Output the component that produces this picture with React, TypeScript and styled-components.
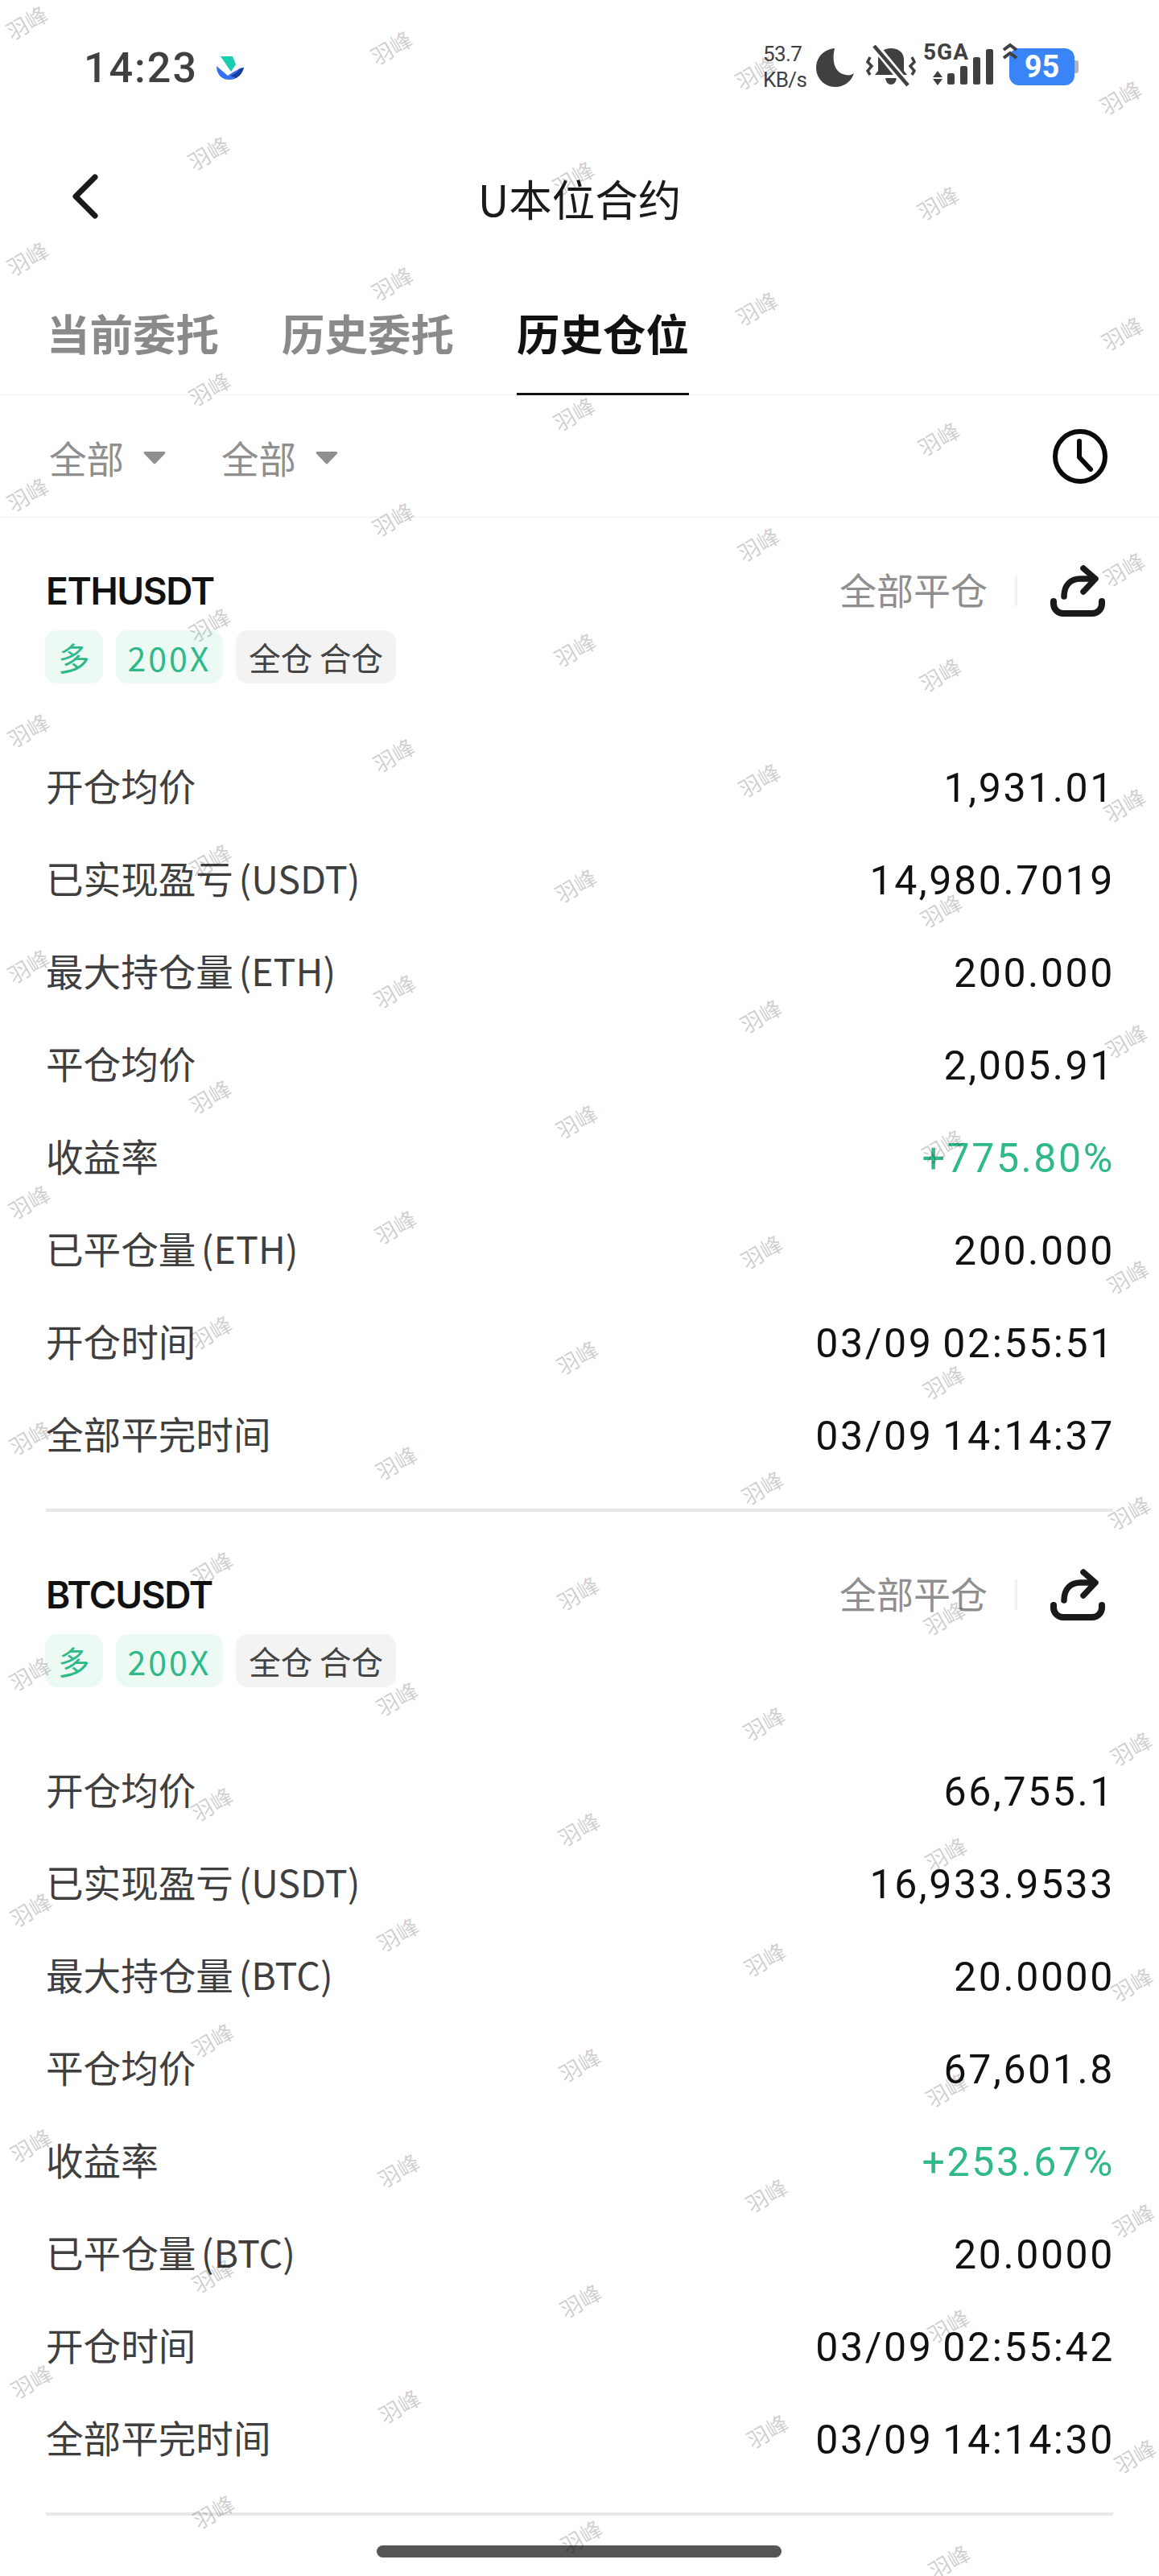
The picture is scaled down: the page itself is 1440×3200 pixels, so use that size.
import React from "react";
import styled, { createGlobalStyle } from "styled-components";

const CJK = `"Noto Sans CJK SC", sans-serif`;
const NUM = `Roboto, "Noto Sans CJK SC", sans-serif`;

const Global = createGlobalStyle`
  html, body { margin: 0; padding: 0; background: #fff; }
  #root { width: 1440px; }
  * { box-sizing: border-box; }
`;

const Page = styled.div`
  position: relative;
  width: 1440px;
  height: 3200px;
  overflow: hidden;
  background: #fff;
  font-family: ${CJK};
`;

const StatusBar = styled.div`
  height: 170px;
  display: flex;
  align-items: center;
  padding: 0 105px 0 104px;
`;
const Clock = styled.div`
  font: 500 52px/1 Roboto, sans-serif;
  letter-spacing: 2px;
  color: #404040;
  width: 164px;
`;
const AppLogo = styled.svg`
  width: 36px;
  height: 30px;
`;
const StatusRight = styled.div`
  margin-left: auto;
  display: flex;
  align-items: flex-start;
  height: 60px;
`;
const Speed = styled.div`
  width: 52px;
  margin-top: -4px;
  margin-right: 14px;
  font: 400 26px/32px Roboto, sans-serif;
  color: #404040;
  letter-spacing: -0.6px;
`;
const IconGap = styled.svg<{ $mr?: number; $mt?: number }>`
  display: block;
  flex: none;
  margin-right: ${(p) => p.$mr ?? 0}px;
  margin-top: ${(p) => p.$mt ?? 0}px;
`;
const SignalBox = styled.div`
  position: relative;
  width: 90px;
  height: 60px;
  margin-right: 17px;
`;
const NetLabel = styled.span`
  position: absolute;
  left: 0;
  top: -3px;
  font: 700 28px/26px Roboto, sans-serif;
  color: #404040;
  letter-spacing: 1px;
`;
const BatteryBox = styled.div`
  position: relative;
  width: 81px;
  height: 46px;
  margin-top: 5px;
  background: #3a85f5;
  border-radius: 12px;
  display: flex;
  align-items: center;
  justify-content: center;
  color: #fff;
  font: 700 38px/1 Roboto, sans-serif;
  &::after {
    content: "";
    position: absolute;
    right: -5px;
    top: 15px;
    width: 5px;
    height: 16px;
    background: #b0b4ba;
    border-radius: 0 3px 3px 0;
  }
`;
const Charge = styled.svg`
  position: absolute;
  left: -8px;
  top: -7px;
`;

const Header = styled.div`
  position: relative;
  height: 156px;
  display: flex;
  align-items: center;
  justify-content: center;
`;
const Back = styled.svg`
  position: absolute;
  left: 88px;
  top: 46px;
`;
const Title = styled.div`
  font-size: 53.5px;
  line-height: 1;
  padding-bottom: 5px;
  font-weight: 400;
  color: #1a1a1a;
`;

const Tabs = styled.div`
  height: 165px;
  display: flex;
  gap: 78px;
  padding: 0 58px;
  border-bottom: 1px solid #f1f1f1;
`;
const Tab = styled.div<{ $active?: boolean }>`
  height: 165px;
  padding-top: 55px;
  font-size: 53.5px;
  line-height: 64px;
  font-weight: 700;
  color: ${(p) => (p.$active ? "#111" : "#8a8a8a")};
  border-bottom: ${(p) => (p.$active ? "3px solid #111" : "0")};
`;

const Filters = styled.div`
  height: 152px;
  display: flex;
  align-items: center;
  padding: 0 64px 0 61px;
  border-bottom: 1px solid #f1f1f1;
`;
const Filter = styled.div`
  display: flex;
  align-items: center;
  width: 214px;
  font-size: 46.5px;
  color: #8f8f8f;
  line-height: 1;
  padding-top: 4px;
`;
const Caret = styled.svg`
  margin-left: 24px;
`;
const ClockIcon = styled.svg`
  margin-left: auto;
`;

const Card = styled.section`
  margin: 0 57px 12px;
  padding: 66px 0 34px;
  border-bottom: 4px solid #e8e8e8;
`;
const CardHead = styled.div`
  height: 50px;
  display: flex;
  align-items: center;
`;
const Symbol = styled.div`
  font: 600 46px/1 Inter, sans-serif;
  color: #111;
  letter-spacing: -1.4px;
`;
const CloseAll = styled.div`
  margin-left: auto;
  font-size: 46px;
  line-height: 1;
  padding-bottom: 6px;
  color: #8f8f8f;
`;
const Divider = styled.div`
  width: 3px;
  height: 38px;
  margin: 0 41px 0 34px;
  background: #f2f2f2;
`;
const Share = styled.svg`
  margin-right: 10px;
`;
const TagRow = styled.div`
  display: flex;
  gap: 16px;
  margin-top: 24px;
  margin-left: -1px;
`;
const Tag = styled.div<{ $green?: boolean; $wide?: boolean }>`
  height: 66px;
  padding: 0 ${(p) => (p.$wide ? 15 : 16)}px;
  display: flex;
  align-items: center;
  border-radius: 15px;
  font-size: ${(p) => (p.$wide ? 41 : 39.5)}px;
  line-height: 1;
  letter-spacing: ${(p) => (p.$wide ? "3px" : "0")};
  color: ${(p) => (p.$green ? "#2fb98a" : "#444")};
  background: ${(p) => (p.$green ? "#edfaf4" : "#f3f3f3")};
`;
const Rows = styled.div`
  margin-top: 71px;
`;
const Row = styled.div`
  height: 115px;
  display: flex;
  align-items: center;
  justify-content: space-between;
`;
const Label = styled.div`
  font-size: 46.6px;
  line-height: 1;
  padding-bottom: 5px;
  font-weight: 400;
  color: #3f3f3f;
  word-spacing: -4px;
`;
const Value = styled.div<{ $green?: boolean }>`
  font: 400 50px/1 ${NUM};
  letter-spacing: 2.6px;
  word-spacing: -3px;
  padding-top: 3px;
  margin-right: -2px;
  white-space: pre;
  color: ${(p) => (p.$green ? "#2fb98a" : "#111")};
`;
const HomeBar = styled.div`
  position: absolute;
  left: 468px;
  top: 3162px;
  width: 503px;
  height: 15px;
  border-radius: 8px;
  background: #555;
`;
const Watermarks = styled.div`
  position: absolute;
  inset: 0;
  pointer-events: none;
`;
const Mark = styled.span`
  position: absolute;
  width: 56px;
  margin: -16px 0 0 -28px;
  text-align: center;
  font-size: 27px;
  line-height: 32px;
  color: rgba(0, 0, 0, 0.2);
  transform: rotate(-30deg);
  white-space: nowrap;
`;

type CardData = {
  symbol: string;
  rows: [string, string, boolean?][];
};

const cards: CardData[] = [
  {
    symbol: "ETHUSDT",
    rows: [
      ["开仓均价", "1,931.01"],
      ["已实现盈亏 (USDT)", "14,980.7019"],
      ["最大持仓量 (ETH)", "200.000"],
      ["平仓均价", "2,005.91"],
      ["收益率", "+775.80%", true],
      ["已平仓量 (ETH)", "200.000"],
      ["开仓时间", "03/09 02:55:51"],
      ["全部平完时间", "03/09 14:14:37"],
    ],
  },
  {
    symbol: "BTCUSDT",
    rows: [
      ["开仓均价", "66,755.1"],
      ["已实现盈亏 (USDT)", "16,933.9533"],
      ["最大持仓量 (BTC)", "20.0000"],
      ["平仓均价", "67,601.8"],
      ["收益率", "+253.67%", true],
      ["已平仓量 (BTC)", "20.0000"],
      ["开仓时间", "03/09 02:55:42"],
      ["全部平完时间", "03/09 14:14:30"],
    ],
  },
];

const marks: { x: number; y: number }[] = [];
for (let k = 0; k < 11; k++) {
  for (let c = 0; c < 4; c++) {
    marks.push({ x: 33 + 453 * c + k * (0.6 + 0.4 * c), y: 28 + 293 * k + 31 * c });
  }
  for (let c = 0; c < 3; c++) {
    marks.push({ x: 259 + 453 * c + k * (0.6 + 0.4 * c), y: 190 + 293 * k + 31 * c });
  }
}

function Card1({ data }: { data: CardData }) {
  return (
    <Card>
      <CardHead>
        <Symbol>{data.symbol}</Symbol>
        <CloseAll>全部平仓</CloseAll>
        <Divider />
        <Share width="68" height="64" viewBox="0 0 68 64" fill="none" stroke="#1a1a1a" strokeLinecap="round" strokeLinejoin="round">
          <path d="M4 45v3a12 12 0 0 0 12 12h36a12 12 0 0 0 12-12v-3" strokeWidth="8" />
          <path d="M17 39c0-14 8-22 20-22h17" strokeWidth="7.5" />
          <path d="M41 4l15 13-15 16" strokeWidth="7.5" />
        </Share>
      </CardHead>
      <TagRow>
        <Tag $green>多</Tag>
        <Tag $green $wide>200X</Tag>
        <Tag>全仓 合仓</Tag>
      </TagRow>
      <Rows>
        {data.rows.map(([l, v, g]) => (
          <Row key={l}>
            <Label>{l}</Label>
            <Value $green={g}>{v}</Value>
          </Row>
        ))}
      </Rows>
    </Card>
  );
}

export default function App() {
  return (
    <Page>
      <Global />
      <StatusBar>
        <Clock>14:23</Clock>
        <AppLogo viewBox="0 0 36 30">
          <path d="M1 12l14 12 6-4 9-5 5-1c-2 8-8 15-18 15C8 29 1 23 1 12z" fill="#3670f0" />
          <path d="M18 24c6-2 10-6 12-9l5-1c-2 7-6 11-10 13z" fill="#1a3fa0" />
          <path d="M6 0h15l4 10-6 9z" fill="#18cdb0" />
        </AppLogo>
        <StatusRight>
          <Speed>
            53.7
            <br />
            KB/s
          </Speed>
          <IconGap width="47" height="48" viewBox="0 0 47 48" $mr={15} $mt={5}>
            <path d="M23 0C10 1 0 11 0 24s10 24 24 24c11 0 20-7 23-17-3 2-6 3-10 2C27 32 18 22 23 0z" fill="#404040" />
          </IconGap>
          <IconGap width="62" height="54" viewBox="0 0 62 54" $mr={9} $mt={1} fill="none">
            <path d="M11 37l4-5V18C15 9 22 4 31 4s16 5 16 14v14l4 5z" fill="#404040" />
            <path d="M24 41h14c-1 5-3 8-7 8s-6-3-7-8z" fill="#404040" />
            <path d="M11 1l40 49" stroke="#fff" strokeWidth="10" />
            <path d="M10 1l42 49" stroke="#404040" strokeWidth="4.5" />
            <path d="M5 15l-3 6 5 5-5 6 3 5M57 15l3 6-5 5 5 6-3 5" stroke="#404040" strokeWidth="3.5" />
          </IconGap>
          <SignalBox>
            <NetLabel>5GA</NetLabel>
            <IconGap width="90" height="60" viewBox="0 0 90 60">
              <path d="M18 33l6 8H12zM18 51l-6-8h12z" fill="#404040" />
              <rect x="30" y="36" width="9" height="14" rx="2.5" fill="#404040" />
              <rect x="46" y="27" width="9" height="23" rx="2.5" fill="#404040" />
              <rect x="62" y="16" width="9" height="34" rx="2.5" fill="#404040" />
              <rect x="78" y="6" width="9" height="44" rx="2.5" fill="#404040" />
            </IconGap>
          </SignalBox>
          <BatteryBox>
            <Charge width="20" height="26" viewBox="0 0 20 26" fill="none">
              <path d="M1 9l8-6 8 6M1 19l8-6 8 6" stroke="#404040" strokeWidth="4" />
            </Charge>
            95
          </BatteryBox>
        </StatusRight>
      </StatusBar>
      <Header>
        <Back width="36" height="56" viewBox="0 0 36 56" fill="none">
          <path d="M30 4L6 28l24 24" stroke="#1a1a1a" strokeWidth="7" strokeLinecap="round" strokeLinejoin="round" />
        </Back>
        <Title>U本位合约</Title>
      </Header>
      <Tabs>
        <Tab>当前委托</Tab>
        <Tab>历史委托</Tab>
        <Tab $active>历史仓位</Tab>
      </Tabs>
      <Filters>
        <Filter>
          全部
          <Caret width="28" height="17" viewBox="0 0 28 17">
            <path d="M2 1h24a1.5 1.5 0 0 1 1 2.4L15 16a1.5 1.5 0 0 1-2 0L1 3.4A1.5 1.5 0 0 1 2 1z" fill="#8f8f8f" />
          </Caret>
        </Filter>
        <Filter>
          全部
          <Caret width="28" height="17" viewBox="0 0 28 17">
            <path d="M2 1h24a1.5 1.5 0 0 1 1 2.4L15 16a1.5 1.5 0 0 1-2 0L1 3.4A1.5 1.5 0 0 1 2 1z" fill="#8f8f8f" />
          </Caret>
        </Filter>
        <ClockIcon width="68" height="68" viewBox="0 0 68 68" fill="none" stroke="#0a0a0a" strokeLinecap="round" strokeLinejoin="round">
          <circle cx="34" cy="34" r="31" strokeWidth="6" />
          <path d="M33 15v20l14 15" strokeWidth="6" />
        </ClockIcon>
      </Filters>
      {cards.map((c) => (
        <Card1 key={c.symbol} data={c} />
      ))}
      <HomeBar />
      <Watermarks>
        {marks.map((m, i) => (
          <Mark key={i} style={{ left: m.x, top: m.y }}>
            羽峰
          </Mark>
        ))}
      </Watermarks>
    </Page>
  );
}
